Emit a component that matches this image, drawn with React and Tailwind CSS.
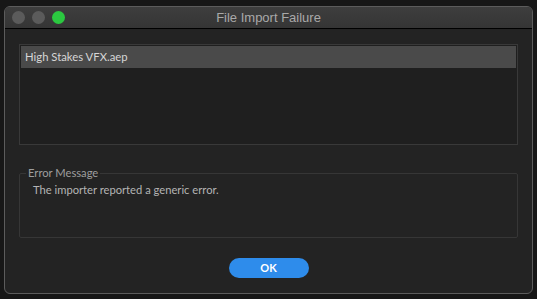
export default function App() {
  return (
    <div className="w-[537px] h-[299px] bg-[#171717] pt-[6px] pl-[4px] pr-[4px] pb-[5px] overflow-hidden" style={{ fontFamily: "Lato, 'Open Sans', sans-serif" }}>
      <div className="w-full h-full rounded-[6px] border border-[#5c5c5c] bg-[#232323] flex flex-col overflow-hidden">
        <div className="relative h-[22px] shrink-0 bg-gradient-to-b from-[#3e3e3e] to-[#353535] border-b border-black flex items-center justify-center">
          <div className="absolute left-[7px] top-[4px] flex gap-[7px]">
            <span className="w-[13px] h-[13px] rounded-full bg-[#5b5b5b]" />
            <span className="w-[13px] h-[13px] rounded-full bg-[#5b5b5b]" />
            <span className="w-[13px] h-[13px] rounded-full bg-[#2bc840]" />
          </div>
          <span className="text-[13px] text-[#a9a9a9]" style={{ fontFamily: "'Liberation Sans', Arial, sans-serif" }}>File Import Failure</span>
        </div>
        <div className="flex flex-col px-[14px] pt-[15px]">
          <div className="h-[101px] border border-[#393939] bg-[#1f1f1f] p-[1px]">
            <div className="h-[22px] bg-[#4a4a4a] flex items-center pl-[4px] text-[11.3px] text-[#d6d6d6]">High Stakes VFX.aep</div>
          </div>
          <fieldset className="mt-[21px] h-[72px] border border-[#363636] rounded-[2px] pl-[6px] pr-[6px] m-0">
            <legend className="px-[2px] text-[11.2px] text-[#9e9e9e] leading-[14px]">Error Message</legend>
            <div className="pl-[7px] pt-[2px] text-[11.2px] text-[#b4b4b4]">The importer reported a generic error.</div>
          </fieldset>
          <div className="flex justify-center mt-[20px]">
            <button className="w-[80px] h-[20px] rounded-full bg-[#2e8ceb] text-white text-[11px] font-bold leading-[20px]">OK</button>
          </div>
        </div>
      </div>
    </div>
  );
}
